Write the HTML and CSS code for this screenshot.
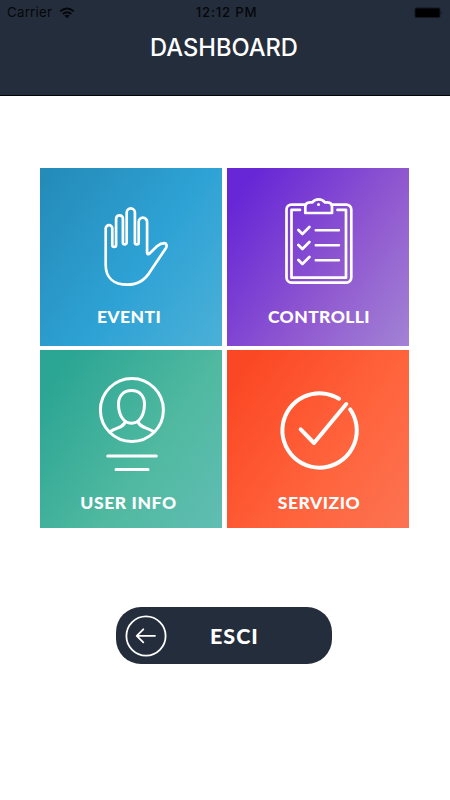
FILE: index.html
```html
<!DOCTYPE html>
<html lang="it">
<head>
<meta charset="utf-8">
<title>Dashboard</title>
<link rel="stylesheet" href="styles.css">
</head>
<body>
<header class="header">
  <div class="status">
    <div class="carrier"><span>Carrier</span>
      <svg width="16" height="12" viewBox="0 0 16 12"><g fill="none" stroke="#05070b" stroke-width="1.9"><path d="M1.2 4.3Q8-1.5 14.8 4.3"/><path d="M3.7 7Q8 3.4 12.3 7"/></g><path d="M5.4 8.6Q8 6.7 10.6 8.6L8 11.2Z" fill="#05070b"/></svg>
    </div>
    <div class="time">12:12 PM</div>
    <div class="battery">
      <svg width="30" height="12" viewBox="0 0 30 12"><rect x=".5" y=".5" width="26" height="10.5" rx="2" fill="#121923"/><rect x="1.500" y="1.500" width="24" height="8.500" rx="1" fill="#000"/><path d="M27.600 4Q29 5.700 27.600 7.600Z" fill="#05070b"/></svg>
    </div>
  </div>
  <h1 class="title">DASHBOARD</h1>
</header>
<main class="main">
  <div class="tiles">
    <a class="tile events">
      <svg class="icon" viewBox="40 168 182 130"><path stroke-width="2.7" d="M105.700 265V228.500a3.300 3.300 0 0 1 6.600 0V245a1.900 1.900 0 0 0 3.800 0V218.700a3.400 3.400 0 0 1 6.800 0V242.500a1.900 1.900 0 0 0 3.800 0V212.500a4.100 4.100 0 0 1 8.200 0V242.500a1.900 1.900 0 0 0 3.800 0V221.900a4.200 4.200 0 0 1 8.400 0V252.500Q147.100 254.500 149 254L157 246.200Q160.500 243.200 164.500 243.200C166.800 243.400 167.200 246 165.800 248.200L150.500 271Q142.500 284.700 127.500 284.700C113.500 284.700 105.700 277.500 105.700 265Z"/></svg>
      <span class="label">EVENTI</span>
    </a>
    <a class="tile checks">
      <svg class="icon" viewBox="227 168 182 130"><g stroke-width="2.7"><path d="M305 204.600H291.500a5 5 0 0 0-5 5V277.600a5 5 0 0 0 5 5H346.300a5 5 0 0 0 5-5V209.600a5 5 0 0 0-5-5H332.500"/><path d="M300 209.900H291.500V277.700H346V209.900H337.500"/><path d="M305.300 213V207Q305.300 202.300 310 202.300H312.500Q314.500 199.300 318.600 199.300T324.700 202.300H327.200Q332 202.300 332 207V213Z"/><path d="M298.400 230L302.400 234L309.400 227M298.400 245L302.400 249L309.400 242M298.400 260L302.400 264L309.400 257"/><path stroke-width="2.4" d="M315.700 230.300H339M315.700 245.200H339M315.700 260.200H339"/></g><circle cx="318.500" cy="204.500" r="1.500" fill="#fff" stroke="none"/></svg>
      <span class="label">CONTROLLI</span>
    </a>
    <a class="tile user">
      <svg class="icon" viewBox="40 350 182 130"><g stroke-width="3"><circle cx="131.900" cy="410" r="31.500"/><path d="M131.500 390.500C139.500 390.500 144.500 396 144.500 404C144.500 415 139.500 423.300 131.500 423.300S118.500 415 118.500 404C118.500 396 123.500 390.500 131.500 390.500Z"/><path d="M125.300 421.500C123.500 428 117 427 110 431.700M138 421.500C139.800 428 147 427 153.800 431.700"/><path d="M107.700 456H156.300M116 469.400H148"/></g></svg>
      <span class="label">USER INFO</span>
    </a>
    <a class="tile service">
      <svg class="icon" viewBox="227 350 182 130"><g stroke-width="4"><path d="M339 398.700A37.200 37.200 0 1 0 350.200 409.300"/><path d="M300.700 429.300L314 443L346.300 404"/></g></svg>
      <span class="label">SERVIZIO</span>
    </a>
  </div>
  <button class="exit">
    <svg width="42" height="42" viewBox="0 0 42 42"><g fill="none" stroke="#fff" stroke-linecap="round" stroke-linejoin="round" stroke-width="1.8"><circle cx="21" cy="21" r="19.600"/><path d="M30 20.800H11.700M18.300 14.300L11.700 20.800L18.300 27.300"/></g></svg>
    <span class="exit-label">ESCI</span>
  </button>
</main>
</body>
</html>
```
FILE: styles.css
```css
* { box-sizing: border-box; }
body { margin: 0; width: 450px; height: 800px; background: #fff; overflow: hidden; font-family: Inter, "Liberation Sans", sans-serif; }
.header { height: 96px; background: #242d3b; border-bottom: 1px solid #030509; }
.status { display: grid; grid-template-columns: 1fr auto 1fr; align-items: center; height: 25px; padding: 0 6px 0 7px; color: #05070b; font-size: 13.2px; line-height: 15px; }
.carrier { display: flex; align-items: center; gap: 7px; letter-spacing: 0.3px; }
.time { font-weight: 500; letter-spacing: 0.8px; padding-left: 2px; }
.battery { display: flex; justify-content: flex-end; }
.title { margin: 8px 0 0; padding-right: 2px; text-align: center; color: #fff; font-size: 23.7px; line-height: 30px; font-weight: 500; }
.main { display: flex; flex-direction: column; align-items: center; padding: 72px 1px 0 0; }
.tiles { display: grid; grid-template-columns: 182px 182px; grid-auto-rows: 177.5px; gap: 4.5px 5px; margin-right: 1px; }
.tile { display: flex; flex-direction: column; align-items: center; }
.icon { width: 182px; height: 130px; fill: none; stroke: #fff; stroke-linecap: round; stroke-linejoin: round; }
.label { margin-top: 8px; color: #fff; font: 900 17.5px/22px Lato, sans-serif; letter-spacing: 0.4px; }
.events { background: linear-gradient(125deg, #248ab7, #2ea2d5 55%, #4bb0d7); }
.events .label { padding-right: 3px; }
.checks { background: linear-gradient(125deg, #6727d6 10%, #9058d0 60%, #a283d5); }
.checks .label { padding-left: 3px; }
.user { background: linear-gradient(125deg, #2ba594 10%, #50b9a0 60%, #60bdb3); }
.user .label, .service .label { margin-top: 12px; }
.user .label { padding-right: 4px; letter-spacing: 0.6px; }
.service { background: linear-gradient(125deg, #fb4824 10%, #ff643d 60%, #fc7352); }
.service .label { padding-left: 3px; letter-spacing: 0.5px; }
.exit { display: flex; align-items: center; width: 216px; height: 57px; margin: 79.5px 1px 0 0; padding: 0 0 0 9px; border: 0; border-radius: 25px; background: #242d3b; color: #fff; }
.exit-label { margin-left: 43px; font: 900 21.5px/26px Lato, sans-serif; letter-spacing: 1px; }
```
